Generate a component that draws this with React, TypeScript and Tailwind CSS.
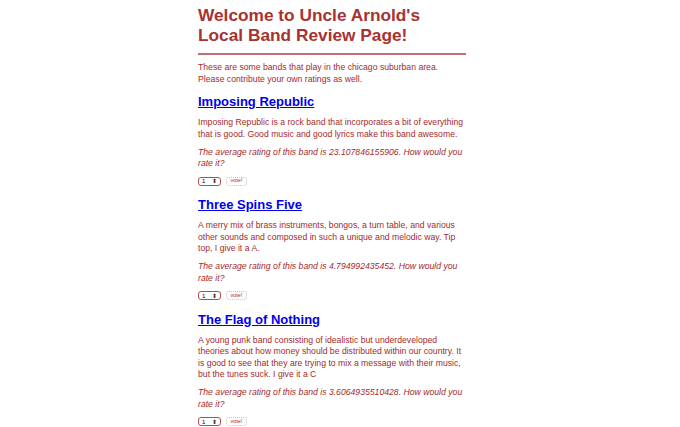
import React from "react";

const bands = [
  {
    name: "Imposing Republic",
    desc: "Imposing Republic is a rock band that incorporates a bit of everything that is good. Good music and good lyrics make this band awesome.",
    rating: "23.107846155906",
  },
  {
    name: "Three Spins Five",
    desc: "A merry mix of brass instruments, bongos, a turn table, and various other sounds and composed in such a unique and melodic way. Tip top, I give it a A.",
    rating: "4.794992435452",
  },
  {
    name: "The Flag of Nothing",
    desc: "A young punk band consisting of idealistic but underdeveloped theories about how money should be distributed within our country. It is good to see that they are trying to mix a message with their music, but the tunes suck. I give it a C",
    rating: "3.6064935510428",
  },
];

function VoteRow() {
  return (
    <div className="flex items-center gap-[5px] mt-[7px]">
      <div className="flex items-center justify-between w-[23px] h-[9px] border border-[#b84a4a] rounded-[3px] bg-white px-[3px]">
        <span className="text-[6px] leading-none text-black">1</span>
        <span className="text-[6px] leading-none text-[#333]">⬍</span>
      </div>
      <button className="h-[9px] w-[21px] border border-dotted border-[#e2b8b8] rounded-[3px] bg-white text-[5.5px] leading-none text-[#a52a2a]">
        vote!
      </button>
    </div>
  );
}

export default function App() {
  return (
    <div
      className="min-h-[427px] bg-white text-[#a52a2a]"
      style={{ fontFamily: '"Liberation Sans", Arial, sans-serif' }}
    >
      <div className="ml-[198px] w-[268px] pt-[5px]">
        <h1 className="text-[17.3px] leading-[20px] font-bold text-[#a83232]">
          Welcome to Uncle Arnold's Local Band Review Page!
        </h1>

        <div className="mt-[8px] h-[2px] bg-[#c07070]" />

        <p className="mt-[7px] text-[8.67px] leading-[11.5px]">
          These are some bands that play in the chicago suburban area.
          <br />
          Please contribute your own ratings as well.
        </p>

        {bands.map((b, i) => (
          <div key={b.name} className={i === 0 ? "mt-[9px]" : "mt-[11.5px]"}>
            <h2 className="text-[13px] leading-[15px] font-bold">
              <a href="#" className="text-[#0000ee] underline">
                {b.name}
              </a>
            </h2>
            <p className="mt-[8px] text-[8.67px] leading-[11.5px]">{b.desc}</p>
            <p className="mt-[6.5px] text-[8.67px] leading-[11.5px] italic">
              {`The average rating of this band is ${b.rating}. How would you rate it?`}
            </p>
            <VoteRow />
          </div>
        ))}
      </div>
    </div>
  );
}
